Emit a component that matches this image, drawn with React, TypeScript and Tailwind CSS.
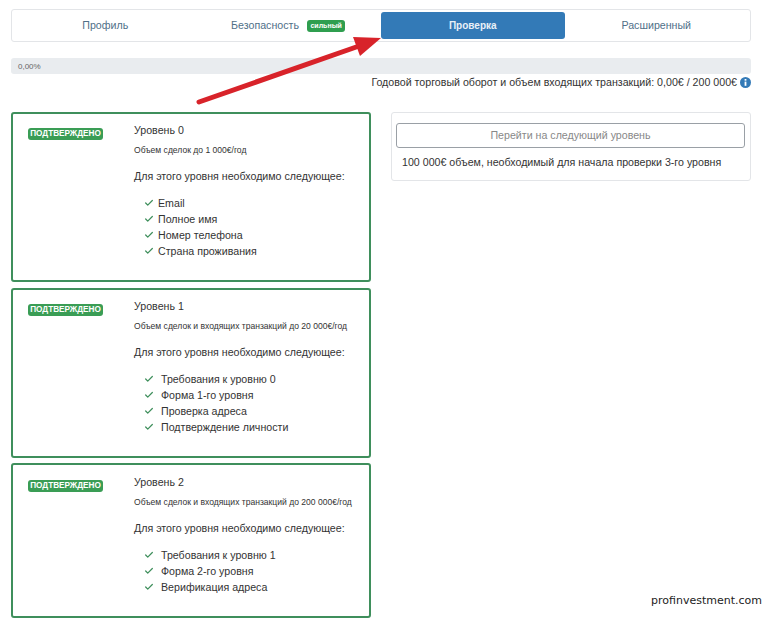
import { Check } from "lucide-react";

const levels = [
  {
    title: "Уровень 0",
    limit: "Объем сделок до 1 000€/год",
    items: ["Email", "Полное имя", "Номер телефона", "Страна проживания"],
    box: "h-[170px] mb-[6px] pt-[9px]",
    gap: "gap-[4px]",
  },
  {
    title: "Уровень 1",
    limit: "Объем сделок и входящих транзакций до 20 000€/год",
    items: ["Требования к уровню 0", "Форма 1-го уровня", "Проверка адреса", "Подтверждение личности"],
    box: "h-[170px] mb-[5px] pt-[9px]",
    gap: "gap-[7px]",
  },
  {
    title: "Уровень 2",
    limit: "Объем сделок и входящих транзакций до 200 000€/год",
    items: ["Требования к уровню 1", "Форма 2-го уровня", "Верификация адреса"],
    box: "h-[155px] pt-[10px]",
    gap: "gap-[7px]",
  },
];

function LevelCard({ level }: { level: (typeof levels)[number] }) {
  return (
    <div className={`flex rounded-[3px] border-2 border-[#3f8f5c] pl-[15px] ${level.box}`}>
      <div className="w-[106px] shrink-0 pt-[5px]">
        <span className="block w-[75px] rounded-[3px] bg-[#3a9d55] py-px text-center text-[8.2px] leading-[10px] font-bold text-white">
          ПОДТВЕРЖДЕНО
        </span>
      </div>
      <div className="text-[#333]">
        <div className="text-[10.65px] leading-[14px]">{level.title}</div>
        <div className="mt-[7px] text-[8.55px] leading-[12px] whitespace-nowrap">{level.limit}</div>
        <div className="mt-[12px] text-[10.65px] leading-[16px]">Для этого уровня необходимо следующее:</div>
        <ul className="mt-[11px] pl-[10px] text-[10.65px] leading-[16px]">
          {level.items.map((item) => (
            <li key={item} className={`flex items-center ${level.gap}`}>
              <Check className="h-[10px] w-[10px] text-[#3f8f5c]" strokeWidth={3} />
              {item}
            </li>
          ))}
        </ul>
      </div>
    </div>
  );
}

export default function App() {
  return (
    <div className="relative h-[622px] w-[776px] overflow-hidden bg-white pl-[11px] pr-[25px] pt-[9px] font-['Liberation_Sans',sans-serif]">
      {/* Tabs */}
      <nav className="grid h-[33px] grid-cols-4 rounded-[3px] border border-[#e3e5e8] p-[2px] text-[10.65px] text-[#4f6f88]">
        <div className="flex items-center justify-center pr-px">Профиль</div>
        <div className="flex items-center justify-center gap-[8px] pr-[2px]">
          Безопасность
          <span className="rounded-[3px] bg-[#2f9e4f] px-[3.5px] text-[7px] leading-[12px] font-bold text-white">сильный</span>
        </div>
        <div className="flex items-center justify-center rounded-[3px] bg-[#337ab7] text-[10px] font-bold text-[#e8f0f7]">Проверка</div>
        <div className="flex items-center justify-center">Расширенный</div>
      </nav>

      {/* Progress */}
      <div className="mt-[16px] flex h-[16px] items-center rounded-[3px] bg-[#e9ecef] pt-px pl-[7px] text-[8px] text-[#666]">0,00%</div>
      <div className="mt-px flex items-center justify-end gap-[3px] text-[10.65px] leading-[14px] text-[#333]">
        Годовой торговый оборот и объем входящих транзакций: 0,00€ / 200 000€
        <svg className="shrink-0" width="11" height="11" viewBox="0 0 11 11">
          <circle cx="5.5" cy="5.5" r="5.5" fill="#337ab7" />
          <rect x="4.6" y="2" width="1.8" height="1.7" fill="#fff" />
          <rect x="4.6" y="4.6" width="1.8" height="4.2" fill="#fff" />
        </svg>
      </div>

      <div className="mt-[23px] flex items-start gap-[20px]">
        {/* Levels */}
        <div className="flex w-[360px] shrink-0 flex-col">
          {levels.map((level) => (
            <LevelCard key={level.title} level={level} />
          ))}
        </div>

        {/* Next level */}
        <div className="h-[69px] flex-1 rounded-[3px] border border-[#e3e5e8] pt-[10px] pr-[5px] pl-[4px] text-[10.65px]">
          <div className="flex h-[25px] items-center justify-center rounded-[3px] border border-[#9aa0a6] pt-px text-[#888]">
            Перейти на следующий уровень
          </div>
          <div className="mt-[6px] pl-[6px] leading-[16px] text-[#333]">100 000€ объем, необходимый для начала проверки 3-го уровня</div>
        </div>
      </div>

      {/* Annotation arrow */}
      <svg className="absolute top-0 left-0" width="776" height="622" viewBox="0 0 776 622">
        <line x1="199" y1="102" x2="362" y2="45" stroke="#d8232a" strokeWidth="5" strokeLinecap="round" />
        <polygon points="381,38 360,56 353,37" fill="#d8232a" />
      </svg>

      <div className="absolute top-[594px] left-[651px] text-[11px] leading-[14px] text-[#222] font-['DejaVu_Sans',sans-serif]">
        profinvestment.com
      </div>
    </div>
  );
}
